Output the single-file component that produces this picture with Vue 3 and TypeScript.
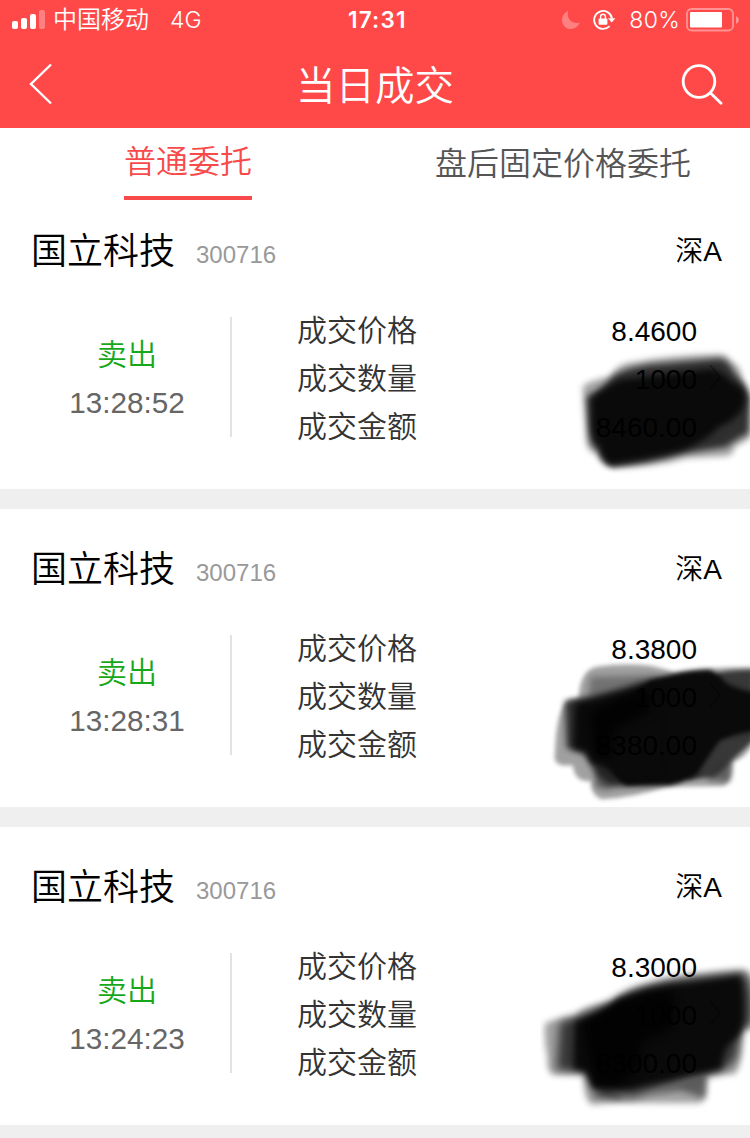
<script setup lang="ts">
interface Stroke {
  d: string
  fill: string
  opacity: number
  kind?: 'edge' | 'wide' | 'core'
}

interface Trade {
  name: string
  code: string
  market: string
  side: string
  time: string
  price: string
  quantity: string
  amount: string
  shift: number
  strokes: Stroke[]
}

const tabs: { label: string; active: boolean }[] = [
  { label: '普通委托', active: true },
  { label: '盘后固定价格委托', active: false },
]

const trades: Trade[] = [
  {
    name: '国立科技', code: '300716', market: '深A', side: '卖出', time: '13:28:52',
    price: '8.4600', quantity: '1000', amount: '8460.00', shift: 0,
    strokes: [
      { fill: '#444', opacity: 0.5, kind: 'wide', d: 'M128 262Q140 242 210 230Q225 200 260 190Q390 164 545 163Q566 168 575 187Q602 195 606 240Q632 255 632 410Q610 430 585 438Q580 466 560 468L440 474Q350 500 225 503Q180 495 170 462Q140 455 138 420Z' },
      { fill: '#1c1c1c', opacity: 0.85, kind: 'wide', d: 'M140 290Q180 275 215 232Q250 205 330 194L540 176Q570 184 580 215Q615 250 630 290L625 400Q590 415 560 440L430 460Q330 490 215 500Q185 485 175 450Q150 440 148 400Z' },
      { fill: '#0a0a0a', opacity: 1, kind: 'wide', d: 'M155 295Q190 265 240 240L515 207Q550 215 580 250Q615 260 615 300Q610 350 535 382Q510 415 430 450Q310 480 210 492Q185 475 180 440Q155 420 155 370Z' },
    ],
  },
  {
    name: '国立科技', code: '300716', market: '深A', side: '卖出', time: '13:28:31',
    price: '8.3800', quantity: '1000', amount: '8380.00', shift: 6,
    strokes: [
      { fill: '#444', opacity: 0.5, d: 'M116 235Q120 150 170 140Q250 128 330 137Q380 148 405 158Q520 140 640 142L640 365Q620 415 578 425Q580 485 550 498L380 500Q290 530 185 538Q150 525 153 482Q105 490 98 435Q35 445 45 400Q48 270 85 239Z' },
      { fill: '#444', opacity: 0.5, kind: 'wide', d: 'M145 230L152 170L340 166L380 180L250 240Z' },
      { fill: '#1c1c1c', opacity: 0.5, kind: 'wide', d: 'M165 500L170 440L240 470L205 510ZM520 430L575 410L570 485L500 480Z' },
      { fill: '#333', opacity: 0.95, d: 'M530 160Q580 150 640 150L640 360Q600 400 570 425Q550 455 520 470L440 480Z' },
      { fill: '#1c1c1c', opacity: 0.85, kind: 'wide', d: 'M75 244Q190 225 310 184Q440 150 510 152L560 190L640 220L640 335L535 355L470 465L390 494L220 500Q165 475 155 435L130 400L80 385Z' },
      { fill: '#0a0a0a', opacity: 1, d: 'M270 225L330 184Q440 152 510 154Q540 164 555 190Q595 215 640 218L640 330Q560 345 535 365Q495 420 470 460Q440 485 390 492L260 496Q220 470 210 435Z' },
      { fill: '#0a0a0a', opacity: 1, kind: 'wide', d: 'M105 250L250 217L360 185L360 450L250 485Q200 440 155 430L140 395L100 385Z' },
      { fill: '#020202', opacity: 1, kind: 'core', d: 'M150 280L250 230L330 210L330 270L220 330L215 410L165 410Z' },
    ],
  },
  {
    name: '国立科技', code: '300716', market: '深A', side: '卖出', time: '13:24:23',
    price: '8.3000', quantity: '1000', amount: '8300.00', shift: 12,
    strokes: [
      { fill: '#444', opacity: 0.5, kind: 'wide', d: 'M15 250Q45 235 108 228Q115 200 218 185Q245 150 330 132Q450 98 610 90Q635 95 640 130L640 265L605 270Q610 370 585 402L498 407Q505 480 480 489L240 488L155 494Q130 480 130 400L40 405Q20 400 22 350Q10 300 15 250Z' },
      { fill: '#333', opacity: 0.6, kind: 'wide', d: 'M155 470L205 440L260 480L340 458L500 405L495 475L420 450L340 460L240 480Z' },
      { fill: '#1c1c1c', opacity: 0.8, kind: 'core', d: 'M60 246Q190 205 240 170Q320 125 440 114L610 97Q645 130 635 250L605 270L590 350Q570 390 500 405L280 470L165 460L140 400L50 390Z' },
      { fill: '#0a0a0a', opacity: 1, kind: 'wide', d: 'M105 245Q190 225 235 180Q340 138 440 130L600 108Q615 150 610 250Q603 290 570 310Q545 340 545 385Q500 398 450 405L270 447L160 445L140 395L100 385Z' },
      { fill: '#020202', opacity: 1, kind: 'core', d: 'M130 245L230 190L330 160L405 155L400 260L300 310L290 385L240 435L170 435L150 370Z' },
    ],
  },
]
</script>

<template>
  <div class="screen">
    <header class="top">
      <div class="status">
        <svg class="signal" width="34" height="22" viewBox="0 0 34 22" fill="#fff">
          <rect x="0" y="12" width="6" height="8" rx="2" />
          <rect x="9" y="9" width="6" height="11" rx="2" />
          <rect x="18" y="5" width="6" height="15" rx="2" />
          <rect x="27" y="1" width="6" height="19" rx="2" opacity=".3" />
        </svg>
        <span class="carrier">中国移动</span>
        <span class="network">4G</span>
        <span class="clock">17:31</span>
        <div class="indicators">
          <svg width="20" height="20" viewBox="0 0 20 20">
            <path d="M7.2 1C5.3 7.8 9.8 14.7 18.8 12.8C16.8 16.9 13.4 19 9.8 19C4.9 19 1 15.2 1 10.2C1 5.9 3.5 2.4 7.2 1Z" fill="#ff8080" />
          </svg>
          <svg class="lock" width="25" height="22" viewBox="0 0 25 22" fill="none" stroke="#fff" stroke-width="1.8">
            <path d="M20 9.5A9 9 0 1 0 17.6 17.2" />
            <path d="M16 9.3H23.4L19.7 13.5Z" fill="#fff" stroke="none" />
            <rect x="6.6" y="9.4" width="8.8" height="6.4" rx="1" fill="#fff" stroke="none" />
            <path d="M8.6 10V7.6a2.4 2.4 0 0 1 4.8 0V10" stroke-width="1.4" />
          </svg>
          <span class="percent">80%</span>
          <svg class="battery" width="54" height="24" viewBox="0 0 54 24">
            <rect x="1" y="1" width="46" height="21.5" rx="4.5" fill="none" stroke="#ff9292" stroke-width="1.8" />
            <rect x="4" y="4" width="32" height="15.5" rx="1" fill="#fff" />
            <path d="M50 8Q53 9.5 53 12T50 16Z" fill="#ff9292" />
          </svg>
        </div>
      </div>
      <nav class="bar">
        <svg width="24" height="42" viewBox="0 0 24 42" fill="none" stroke="#fff" stroke-width="2.4">
          <path d="M22 1.5L2 21L22 40.5" />
        </svg>
        <h1>当日成交</h1>
        <svg width="42" height="42" viewBox="0 0 42 42" fill="none" stroke="#fff" stroke-width="2.8" stroke-linecap="round">
          <circle cx="18" cy="18.5" r="15.8" />
          <path d="M29.5 30L40 40.3" />
        </svg>
      </nav>
    </header>

    <div class="tabs">
      <div v-for="tab in tabs" :key="tab.label" class="tab" :class="{ active: tab.active }">
        <span>{{ tab.label }}</span>
      </div>
    </div>

    <article v-for="trade in trades" :key="trade.time" class="trade">
      <svg class="scribble" width="210" height="189" viewBox="0 0 630 567">
        <g :transform="`translate(0 ${trade.shift})`">
          <path
            v-for="(stroke, i) in trade.strokes"
            :key="i"
            :d="stroke.d"
            :fill="stroke.fill"
            :opacity="stroke.opacity"
            :class="stroke.kind ?? 'edge'"
          />
        </g>
      </svg>
      <div class="heading">
        <h2>{{ trade.name }}</h2>
        <span class="code">{{ trade.code }}</span>
        <span class="market">{{ trade.market }}</span>
      </div>
      <div class="body">
        <div class="action">
          <span class="side">{{ trade.side }}</span>
          <span class="time">{{ trade.time }}</span>
        </div>
        <dl>
          <div><dt>成交价格</dt><dd>{{ trade.price }}</dd></div>
          <div><dt>成交数量</dt><dd>{{ trade.quantity }}</dd></div>
          <div><dt>成交金额</dt><dd>{{ trade.amount }}</dd></div>
        </dl>
        <svg class="chevron" width="12" height="28" viewBox="0 0 12 28" fill="none" stroke="#000" stroke-opacity=".4" stroke-width="1.2">
          <path d="M1 2L11 14L1 26" />
        </svg>
      </div>
    </article>
  </div>
</template>

<style>
body {
  margin: 0;
  background: #efefef;
}
</style>

<style scoped>
.screen {
  width: 750px;
  height: 1138px;
  overflow: hidden;
  background: #efefef;
  color: #000;
  font-family: "Liberation Sans", "Noto Sans CJK SC", sans-serif;
  font-weight: 350;
}
h1, h2, dl, dd {
  margin: 0;
  font-weight: inherit;
}
svg {
  display: block;
  flex: none;
}
.top {
  height: 128px;
  background: #ff4949;
  color: #fff;
}
.status {
  display: grid;
  grid-template-columns: 41px 117px 178px 1fr auto;
  align-items: center;
  height: 40px;
  padding: 0 10px 0 12px;
  font: 350 23px/40px Inter, "Noto Sans CJK SC", sans-serif;
}
.clock {
  font-weight: 600;
  font-size: 22.5px;
  letter-spacing: 1.2px;
}
.carrier {
  font-size: 24px;
}
.indicators {
  display: flex;
  align-items: center;
}
.lock {
  margin-left: 11px;
}
.percent {
  margin: 0 6px 0 12px;
  letter-spacing: 0.3px;
}
.bar {
  display: flex;
  align-items: center;
  justify-content: space-between;
  height: 88px;
  padding: 0 27px 0 29px;
}
.bar h1 {
  margin: 3px 0 0 16px;
  font-size: 39.5px;
  line-height: 88px;
}
.tabs {
  display: grid;
  grid-template-columns: 1fr 1fr;
  height: 63px;
  background: #fff;
  color: #555;
  font-size: 32px;
}
.tab {
  display: flex;
  justify-content: center;
  padding-left: 1px;
}
.tab span {
  position: relative;
  z-index: 1;
  height: 72px;
  box-sizing: border-box;
  line-height: 72px;
}
.tab.active span {
  line-height: 68px;
  color: #f84a4a;
  border-bottom: 4px solid #f84a4a;
}
.trade {
  position: relative;
  height: 298px;
  margin-bottom: 20px;
  overflow: hidden;
  background: #fff;
}
.scribble {
  position: absolute;
  top: 109px;
  right: 0;
}
.edge {
  filter: blur(6px);
}
.wide {
  filter: blur(9px);
}
.core {
  filter: blur(15px);
}
.heading {
  display: flex;
  align-items: center;
  height: 120px;
  padding: 0 28px 0 31px;
}
.heading h2 {
  margin-bottom: 7px;
  font-size: 36px;
}
.code {
  margin: 7px 0 0 21px;
  color: #999;
  font-size: 24px;
}
.market {
  margin: 0 0 4px auto;
  font-size: 28px;
}
.body {
  position: relative;
  display: flex;
  align-items: center;
  height: 132px;
}
.action {
  display: flex;
  flex-direction: column;
  align-items: center;
  justify-content: center;
  box-sizing: border-box;
  width: 232px;
  height: 120px;
  padding: 4px 20px 0 44px;
  border-right: 2px solid #e2e2e2;
  font-size: 30px;
  line-height: 48px;
}
.side {
  color: #17a81a;
}
.time {
  color: #666;
  font-size: 29.7px;
}
dl {
  width: 400px;
  margin: 5px 0 0 65px;
}
dl div {
  display: flex;
  justify-content: space-between;
  height: 48px;
  line-height: 48px;
}
dt {
  margin-top: -1px;
  color: #333;
  font-size: 30px;
}
dd {
  font-size: 28px;
}
.chevron {
  margin-left: 12px;
}
</style>
